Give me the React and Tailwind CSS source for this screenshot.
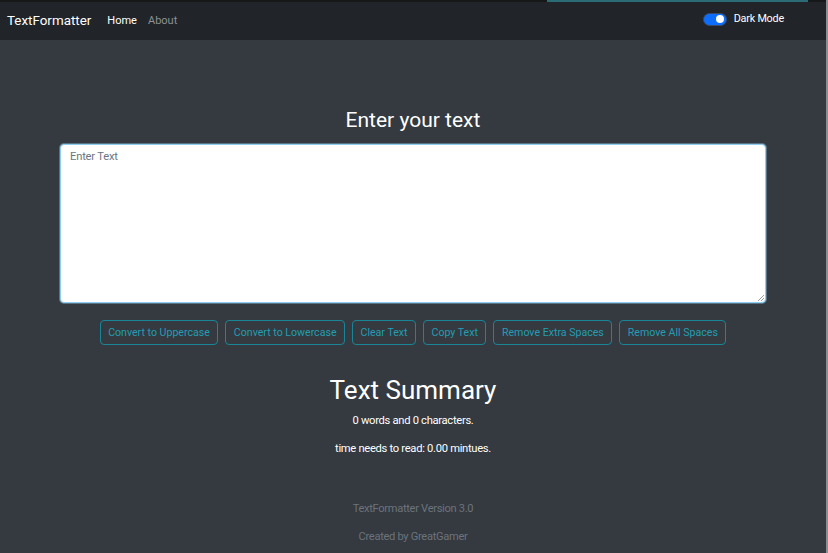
export default function App() {
  const buttons = [
    "Convert to Uppercase",
    "Convert to Lowercase",
    "Clear Text",
    "Copy Text",
    "Remove Extra Spaces",
    "Remove All Spaces",
  ];
  return (
    <div
      className="w-[828px] h-[553px] flex bg-[#343a40] overflow-hidden"
      style={{ fontFamily: "Roboto, 'Liberation Sans', sans-serif" }}
    >
      <div className="flex-1 flex flex-col">
        <div className="h-[2px] bg-[#161719] flex">
          <div className="ml-[547px] w-[261px] bg-[#2b6b75]" />
        </div>
        <nav className="h-[38px] bg-[#212529] flex items-center pl-[7px] pr-[42px]">
          <span className="text-[13.4px] text-white mr-[16px]">TextFormatter</span>
          <span className="text-[11px] text-white mr-[11px] mt-[1px]">Home</span>
          <span className="text-[11px] text-[#8d9094] mt-[1px]">About</span>
          <div className="flex-1" />
          <div className="flex items-center mb-[4px]">
            <div className="w-[24px] h-[13px] rounded-full bg-[#0d6efd] border border-[#3a4a66] flex items-center justify-end pr-[2px] mr-[7px]">
              <div className="w-[8px] h-[8px] rounded-full bg-white" />
            </div>
            <span className="text-[10.8px] tracking-[-0.2px] text-white">Dark Mode</span>
          </div>
        </nav>
        <main className="flex flex-col items-center pt-[68px]">
          <h1 className="text-[21px] leading-[25px] text-white mb-[11px]">Enter your text</h1>
          <div className="w-[706px] h-[159px] bg-white rounded-[4px] border border-[#8ecdf0] shadow-[0_0_0_1px_rgba(142,205,240,0.4)] relative px-[9px] py-[4px] text-[11.2px] leading-[16px] tracking-[-0.2px] text-[#6c757d]">
            Enter Text
            <svg className="absolute right-[1px] bottom-[1px]" width="7" height="7" viewBox="0 0 7 7">
              <path d="M7 1 L1 7 M7 4 L4 7" stroke="#9aa0a6" strokeWidth="1" />
            </svg>
          </div>
          <div className="flex gap-[7px] mt-[17px]">
            {buttons.map((b) => (
              <div
                key={b}
                className="h-[25px] px-[7.5px] flex items-center rounded-[4px] border border-[#1b8598] text-[#249db2] text-[10.6px]"
              >
                {b}
              </div>
            ))}
          </div>
          <h2 className="text-[26px] leading-[31px] text-white mt-[30px] mb-[6px]">Text Summary</h2>
          <p className="text-[11.2px] tracking-[-0.3px] leading-[18px] text-white">0 words and 0 characters.</p>
          <p className="text-[11.2px] tracking-[-0.3px] leading-[18px] text-white mt-[10px]">time needs to read: 0.00 mintues.</p>
          <p className="text-[11.1px] tracking-[-0.3px] leading-[18px] text-[#6c737c] mt-[42px]">TextFormatter Version 3.0</p>
          <p className="text-[11.1px] tracking-[-0.3px] leading-[18px] text-[#6c737c] mt-[10px]">Created by GreatGamer</p>
        </main>
      </div>
      <div className="w-[2px] bg-[#8b8e92]" />
    </div>
  );
}
